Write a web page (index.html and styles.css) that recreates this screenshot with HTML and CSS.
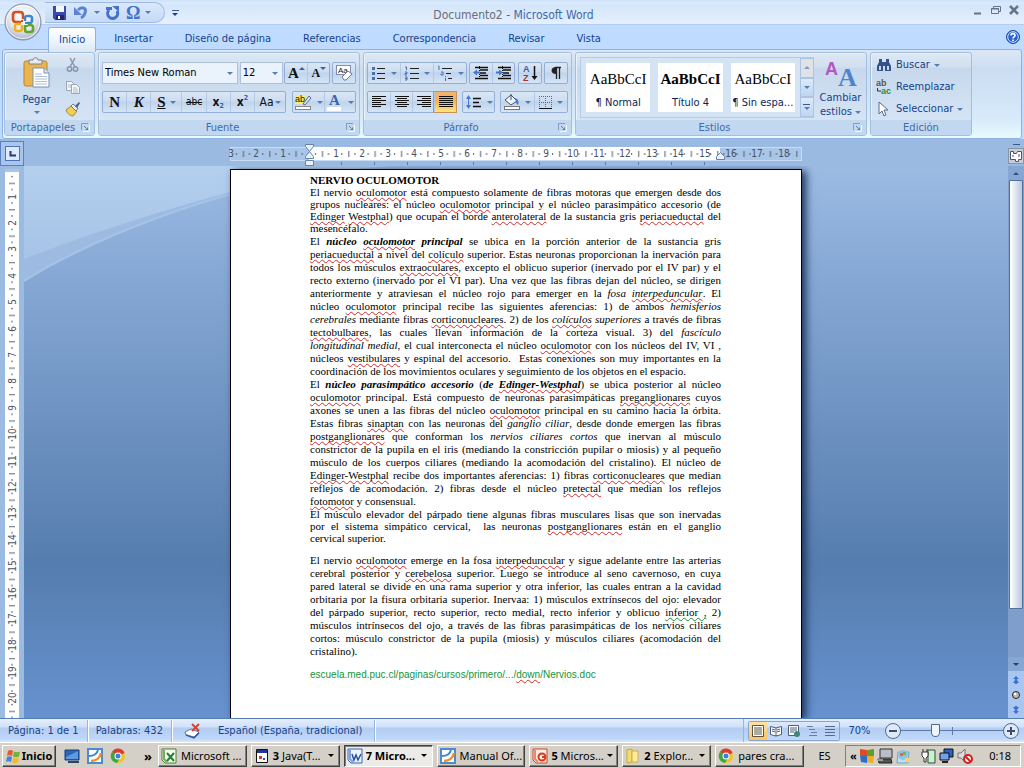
FILE: index.html
```html
<!DOCTYPE html>
<html lang="es">
<head>
<meta charset="utf-8">
<title>Documento2 - Microsoft Word</title>
<link rel="stylesheet" href="styles.css">
</head>
<body>
<div class="app">

<header class="titlebar">
  <div class="quick">
    <button aria-label="Guardar"><svg width="16" height="16" viewBox="0 0 16 16"><path d="M1 1h13v14H3l-2-2z" fill="#3b4aa8"/><path d="M4 1h8v6H4z" fill="#f4f7ff"/><path d="M4 10h8v5H4z" fill="#23286b"/><path d="M6 11h2v3H6z" fill="#fff"/></svg></button>
    <button aria-label="Deshacer"><svg width="16" height="16" viewBox="0 0 16 16"><path d="M5 5C9 1 14 3 12 8c-.6 2-2 4-4 5" fill="none" stroke="#5a84d2" stroke-width="3"/><path d="M1 2v8h8z" fill="#5a84d2"/></svg></button>
    <span class="caret"></span>
    <button aria-label="Rehacer"><svg width="16" height="16" viewBox="0 0 16 16"><path d="M4 5a5 5 0 1 0 8 1" fill="none" stroke="#4272cc" stroke-width="3"/><path d="M7 1h7v6z" fill="#4272cc"/><path d="M1 2h6v3H1z" fill="#4272cc"/></svg></button>
    <button aria-label="Símbolo" class="omega">Ω</button>
    <span class="caret"></span>
  </div>
  <button class="customize" aria-label="Personalizar"><span class="bar"></span><span class="caret dark"></span></button>
  <h1><span>Documento2</span> - Microsoft Word</h1>
  <div class="winbtns">
    <button aria-label="Minimizar"><svg width="12" height="12" viewBox="0 0 12 12"><path d="M2 9.500h7" stroke="#66738c" stroke-width="2"/></svg></button>
    <button aria-label="Restaurar"><svg width="12" height="12" viewBox="0 0 12 12"><path d="M3.500 4V2.500h7v5H9M1.500 4.500h7v5h-7z" fill="none" stroke="#66738c"/><path d="M1 5h8" stroke="#66738c"/></svg></button>
    <button aria-label="Cerrar"><svg width="12" height="12" viewBox="0 0 12 12"><path d="M2 2l8 8M10 2l-8 8" stroke="#66738c" stroke-width="2.500"/></svg></button>
  </div>
</header>

<nav class="tabs" role="tablist">
  <button role="tab" aria-selected="true" class="on">Inicio</button>
  <button role="tab">Insertar</button>
  <button role="tab">Diseño de página</button>
  <button role="tab">Referencias</button>
  <button role="tab">Correspondencia</button>
  <button role="tab">Revisar</button>
  <button role="tab">Vista</button>
  <button class="help" aria-label="Ayuda"><svg width="14" height="14" viewBox="0 0 14 14"><circle cx="7" cy="7" r="6.500" fill="#2765d6" stroke="#1b4aa5"/><circle cx="7" cy="7" r="5.300" fill="none" stroke="#cfe2ff"/><path d="M5 5.500c0-2.500 4-2.500 4 0C9 7 7 6.800 7 8.500M7 9.600v1.500" fill="none" stroke="#fff" stroke-width="1.600"/></svg></button>
</nav>

<button class="office" aria-label="Botón de Office"><svg width="38" height="38" viewBox="0 0 38 38">
  <defs><radialGradient id="orb" cx=".5" cy=".35" r=".65"><stop offset="0" stop-color="#fff"/><stop offset=".6" stop-color="#e3e8f0"/><stop offset="1" stop-color="#a4b1c6"/></radialGradient></defs>
  <circle cx="19" cy="19" r="18" fill="url(#orb)" stroke="#7c8ca8"/><circle cx="19" cy="19" r="16.500" fill="none" stroke="#fff" opacity=".8"/>
  <g fill="none" stroke-width="2.600"><path d="M17 19h-5c-2 0-3-1-3-3v-4c0-2 1-3 3-3h4c2 0 3 1 3 3v4" stroke="#da4f1c"/><path d="M21 18v-3c0-1 1-2 2-2h3c1 0 2 1 2 2v3c0 1-1 2-2 2h-3" stroke="#3a88cf"/><path d="M17 21h-4c-1 0-2 1-2 2v3c0 1 1 2 2 2h3c1 0 2-1 2-2v-3" stroke="#f2b21e"/><path d="M21 22v4c0 2 1 3 2 3h3c2 0 3-1 3-2v-3c0-1-1-2-2-2h-3" stroke="#62a52c"/></g>
  <path d="M17 17h2v2h-2z" fill="#da4f1c"/><path d="M21 19h2v2h-2z" fill="#3a88cf"/><path d="M17 22h2v2h-2z" fill="#f2b21e"/><path d="M22 22h2v2h-2z" fill="#62a52c"/>
</svg></button>

<div class="ribbon">
  <section class="group clip">
    <div class="body">
      <button class="paste"><svg width="30" height="32" viewBox="0 0 30 32"><rect x="2" y="4" width="23" height="25" rx="2" fill="#eab54e" stroke="#b98526"/><path d="M7 3h4c0-3 5-3 5 0h4v4H7z" fill="#e6e9ee" stroke="#7b818c"/><path d="M11 11h11l5 5v14H11z" fill="#fff" stroke="#7a8fb0"/><path d="M22 11v5h5" fill="#dfe9f6" stroke="#7a8fb0"/><path d="M13 17h7M13 19.500h12M13 22h12M13 24.500h12M13 27h12" stroke="#a9bfdd"/></svg><span>Pegar</span><span class="caret"></span></button>
      <div class="stack">
        <button aria-label="Cortar"><svg width="16" height="16" viewBox="0 0 16 16"><path d="M5 1l5 9M10 1L5 10" stroke="#8795ad" stroke-width="1.500"/><circle cx="4.500" cy="12" r="2.200" fill="none" stroke="#8795ad" stroke-width="1.500"/><circle cx="10.500" cy="12" r="2.200" fill="none" stroke="#8795ad" stroke-width="1.500"/></svg></button>
        <button aria-label="Copiar"><svg width="16" height="16" viewBox="0 0 16 16"><path d="M1.500 2.500h5l2 2v7h-7z" fill="#f4f6f9" stroke="#9aa5b7"/><path d="M6.500 5.500h5l3 3v6h-8z" fill="#f4f6f9" stroke="#9aa5b7"/><path d="M3 6h3M3 8h3M8 9h4M8 11h5M8 13h5" stroke="#b0bac8"/></svg></button>
        <button aria-label="Copiar formato"><svg width="16" height="16" viewBox="0 0 16 16"><path d="M1 9l5-4 6 5-4 5c-3 0-6-3-7-6z" fill="#f1cf57" stroke="#a8882f"/><path d="M6 5l2-2 5 4-2 3z" fill="#e9eef5" stroke="#6e7a8d"/><path d="M10 5l4-4 1 1-3 5z" fill="#4d5f86"/></svg></button>
      </div>
    </div>
    <footer><span>Portapapeles</span><button class="launch" aria-label="Portapapeles: opciones"><svg width="9" height="9" viewBox="0 0 9 9"><path d="M.500 7V.500H7" fill="none" stroke="#7c9cc9"/><path d="M8.500 2v6.500H2" fill="none" stroke="#f2f8ff"/><path d="M3 3l2 2" stroke="#567db1"/><path d="M7 4v3H4z" fill="#567db1"/></svg></button></footer>
  </section>

  <section class="group font">
    <div class="body rows">
      <div class="row">
        <div class="combo wide"><select aria-label="Fuente"><option>Times New Roman</option></select><span class="caret"></span></div>
        <div class="combo"><select aria-label="Tamaño"><option>12</option></select><span class="caret"></span></div>
        <div class="set push"><button class="serif" aria-label="Agrandar fuente">A<i class="up"></i></button><button class="serif small" aria-label="Encoger fuente">A<i class="down"></i></button></div>
        <div class="set push"><button aria-label="Borrar formato"><svg width="18" height="18" viewBox="0 0 18 18"><rect x="1.500" y="1.500" width="14" height="9" fill="#fff" stroke="#7d90ad"/><text x="3" y="9" font-size="8" font-family="Liberation Sans" fill="#222">Aa</text><path d="M7 13l6-6 4 3-6 6H9z" fill="#fff" stroke="#66789a"/></svg></button></div>
      </div>
      <div class="row">
        <div class="set style"><button class="serif"><b>N</b></button><button class="serif"><b><i>K</i></b></button><button class="serif split"><b><u>S</u></b><span class="caret"></span></button><button class="tiny"><s>abc</s></button><button class="bold">x<sub>2</sub></button><button class="bold">x<sup>2</sup></button><button class="split aa">Aa<span class="caret"></span></button></div>
        <div class="set"><button class="split" aria-label="Resaltado"><svg width="19" height="18" viewBox="0 0 19 18"><rect x="1" y="2" width="11" height="9" fill="#f7ee63"/><text x="1" y="9" font-size="9" font-family="Liberation Sans" fill="#111">ab</text><path d="M9 11l6-8 2 2-6 7z" fill="#dfe6f0" stroke="#5b6c8a"/><rect x="1.500" y="13.500" width="15" height="3" fill="#fff" stroke="#888"/></svg><span class="caret"></span></button><button class="split" aria-label="Color de fuente"><svg width="18" height="18" viewBox="0 0 18 18"><text x="3" y="12" font-size="15" font-weight="bold" font-family="Liberation Serif" fill="#3f64ad">A</text><rect x="1" y="14" width="14" height="4" fill="#fff"/></svg><span class="caret"></span></button></div>
      </div>
    </div>
    <footer><span>Fuente</span><button class="launch" aria-label="Fuente: opciones"><svg width="9" height="9" viewBox="0 0 9 9"><path d="M.500 7V.500H7" fill="none" stroke="#7c9cc9"/><path d="M8.500 2v6.500H2" fill="none" stroke="#f2f8ff"/><path d="M3 3l2 2" stroke="#567db1"/><path d="M7 4v3H4z" fill="#567db1"/></svg></button></footer>
  </section>

  <section class="group para">
    <div class="body rows">
      <div class="row">
        <div class="set grow">
          <button class="split" aria-label="Viñetas"><svg width="16" height="16" viewBox="0 0 16 16"><path d="M6 3.500h8M6 8.500h8M6 13.500h8" stroke="#222"/><path d="M1 2h3v3H1zM1 7h3v3H1zM1 12h3v3H1z" fill="#4a6fb5"/></svg><span class="caret"></span></button>
          <button class="split" aria-label="Numeración"><svg width="16" height="16" viewBox="0 0 16 16"><path d="M6 3.500h9M6 8.500h9M6 13.500h9" stroke="#222"/><path d="M1 2h1.500v3M1 7h2v1.500H1V10h2M1 12h2v3H1M1 13.500h2" fill="none" stroke="#4a6fb5"/></svg><span class="caret"></span></button>
          <button class="split" aria-label="Lista multinivel"><svg width="18" height="16" viewBox="0 0 18 16"><path d="M6 3.500h10M10 8.500h5M12 13.500h4" stroke="#222"/><path d="M2 1h1v4M5 7h2v3H5V8.500M9.500 11v1M9.500 13v3" fill="none" stroke="#4a6fb5"/></svg><span class="caret"></span></button>
        </div>
        <div class="set">
          <button aria-label="Disminuir sangría"><svg width="18" height="16" viewBox="0 0 18 16"><path d="M3 2.500h13M8 5h8M8 8h6M8 10.500h8M3 13.500h13" stroke="#111" stroke-width="1.500"/><path d="M7.500 1v14" stroke="#111" stroke-dasharray="1 1"/><path d="M1 7.500l4-3v2h3v2H5v2z" fill="#4577cf"/></svg></button>
          <button aria-label="Aumentar sangría"><svg width="18" height="16" viewBox="0 0 18 16"><path d="M3 2.500h13M8 5h8M8 8h6M8 10.500h8M3 13.500h13" stroke="#111" stroke-width="1.500"/><path d="M7.500 1v14" stroke="#111" stroke-dasharray="1 1"/><path d="M8 7.500l-4-3v2H1v2h3v2z" fill="#4577cf"/></svg></button>
        </div>
        <div class="set"><button aria-label="Ordenar"><svg width="18" height="18" viewBox="0 0 18 18"><text x="2" y="8" font-size="9" font-weight="bold" font-family="Liberation Sans" fill="#3c5fa5">A</text><text x="2" y="17" font-size="9" font-weight="bold" font-family="Liberation Sans" fill="#a83434">Z</text><path d="M13.500 2v12" stroke="#111" stroke-width="1.500"/><path d="M10.500 12h6l-3 4z" fill="#111"/></svg></button></div>
        <div class="set"><button aria-label="Mostrar todo"><svg width="16" height="16" viewBox="0 0 16 16"><path d="M13 2.500H7M8.500 2v12M11.500 2v12" stroke="#222" stroke-width="1.300"/><path d="M8 2C2 2 2 9 8 9z" fill="#222"/></svg></button></div>
      </div>
      <div class="row">
        <div class="set align">
          <button aria-label="Izquierda"><svg width="16" height="14" viewBox="0 0 16 14"><path d="M1 1.500h14M1 3.500h9M1 5.500h14M1 7.500h9M1 9.500h14M1 11.500h9" stroke="#111"/></svg></button>
          <button aria-label="Centrar"><svg width="16" height="14" viewBox="0 0 16 14"><path d="M1 1.500h14M3 3.500h10M1 5.500h14M3 7.500h10M1 9.500h14M3 11.500h10" stroke="#111"/></svg></button>
          <button aria-label="Derecha"><svg width="16" height="14" viewBox="0 0 16 14"><path d="M1 1.500h14M6 3.500h9M1 5.500h14M6 7.500h9M1 9.500h14M6 11.500h9" stroke="#111"/></svg></button>
          <button aria-label="Justificar" class="active"><svg width="16" height="14" viewBox="0 0 16 14"><path d="M1 1.500h14M1 3.500h14M1 5.500h14M1 7.500h14M1 9.500h14M1 11.500h14" stroke="#111"/></svg></button>
        </div>
        <div class="set"><button class="split" aria-label="Interlineado"><svg width="18" height="16" viewBox="0 0 18 16"><path d="M8 4.500h8M8 8.500h6M8 12.500h8" stroke="#111" stroke-width="1.300"/><path d="M3.500 3v10" stroke="#4577cf"/><path d="M1 5l2.500-4L6 5zM1 11l2.500 4L6 11z" fill="#4577cf"/></svg><span class="caret"></span></button></div>
        <div class="set grow">
          <button class="split" aria-label="Sombreado"><svg width="18" height="18" viewBox="0 0 18 18"><path d="M2 7l6-5 6 6-6 4z" fill="#eef3fa" stroke="#44536f"/><path d="M8 1v6" stroke="#44536f"/><path d="M12 5c4 1 4 5 3 7-2-1-2-3-3-7z" fill="#4b79c9"/><rect x="1.500" y="13.500" width="15" height="3" fill="#fff" stroke="#777"/></svg><span class="caret"></span></button>
          <button class="split" aria-label="Bordes"><svg width="15" height="15" viewBox="0 0 15 15"><path d="M1.500 1v12M7.500 1v12M13.500 1v12M1 1.500h13M1 7.500h13" stroke="#667" stroke-dasharray="1 1"/><path d="M1 13.500h13" stroke="#111"/></svg><span class="caret"></span></button>
        </div>
      </div>
    </div>
    <footer><span>Párrafo</span><button class="launch" aria-label="Párrafo: opciones"><svg width="9" height="9" viewBox="0 0 9 9"><path d="M.500 7V.500H7" fill="none" stroke="#7c9cc9"/><path d="M8.500 2v6.500H2" fill="none" stroke="#f2f8ff"/><path d="M3 3l2 2" stroke="#567db1"/><path d="M7 4v3H4z" fill="#567db1"/></svg></button></footer>
  </section>

  <section class="group styles">
    <div class="body">
      <div class="gallery">
        <button class="card"><span class="sample">AaBbCcI</span><span>¶ Normal</span></button>
        <button class="card"><span class="sample heavy">AaBbCcI</span><span>Título 4</span></button>
        <button class="card"><span class="sample">AaBbCcI</span><span>¶ Sin espa...</span></button>
        <div class="scroller"><button aria-label="Arriba" class="off"><span class="caret flip"></span></button><button aria-label="Abajo"><span class="caret"></span></button><button aria-label="Más"><span class="bar"></span><span class="caret"></span></button></div>
      </div>
      <button class="change"><svg width="32" height="32" viewBox="0 0 32 32"><text x="0" y="16" font-size="18" font-weight="bold" font-family="Liberation Sans" fill="#b557bd">A</text><text x="13" y="27" font-size="26" font-weight="bold" font-family="Liberation Serif" fill="#4c84cf">A</text></svg><span>Cambiar</span><span>estilos <span class="caret"></span></span></button>
    </div>
    <footer><span>Estilos</span><button class="launch" aria-label="Estilos: opciones"><svg width="9" height="9" viewBox="0 0 9 9"><path d="M.500 7V.500H7" fill="none" stroke="#7c9cc9"/><path d="M8.500 2v6.500H2" fill="none" stroke="#f2f8ff"/><path d="M3 3l2 2" stroke="#567db1"/><path d="M7 4v3H4z" fill="#567db1"/></svg></button></footer>
  </section>

  <section class="group edit">
    <div class="body list">
      <button><svg width="16" height="16" viewBox="0 0 16 16"><path d="M3 2h3v3h4V2h3v3l2 4v5H9V9H7v5H1V9l2-4z" fill="#33518a"/><path d="M3 9h2v4H3zM11 9h2v4h-2z" fill="#c6d8f2"/></svg>Buscar <span class="caret"></span></button>
      <button><svg width="16" height="16" viewBox="0 0 16 16"><text x="0" y="7" font-size="9" font-weight="bold" font-family="Liberation Sans" fill="#555">ab</text><text x="5" y="15" font-size="9" font-weight="bold" font-family="Liberation Sans" fill="#2d8a3a">ac</text><path d="M1.500 9v3H5" fill="none" stroke="#333"/></svg>Reemplazar</button>
      <button><svg width="16" height="16" viewBox="0 0 16 16"><path d="M3 1v12l3-3 2 5 2-1-2-5h4z" fill="#fff" stroke="#5a6b88"/></svg>Seleccionar <span class="caret"></span></button>
    </div>
    <footer><span>Edición</span></footer>
  </section>
</div>

<div class="rulerbar">
  <button class="tabstop" aria-label="Tabulación"><svg width="17" height="17" viewBox="0 0 17 17"><rect x="1.500" y="1.500" width="14" height="14" fill="#dce9fa" stroke="#4d74bb"/><path d="M6.500 6v4.500H12" fill="none" stroke="#223a6e" stroke-width="2"/></svg></button>
  <div class="rulerspace">
    <svg class="hruler" width="572" height="26" viewBox="0 0 572 26">
      <defs>
        <pattern id="cm" x="79" y="0" width="26.350" height="26" patternUnits="userSpaceOnUse"><path d="M6 12h1v2H6zM13 10h1v6h-1zM19 12h1v2h-1z" fill="#555f70"/></pattern>
        <pattern id="stops" x="79" y="0" width="33" height="26" patternUnits="userSpaceOnUse"><path d="M32 21h1v3h-1z" fill="#5d7aa8"/></pattern>
      </defs>
      <rect x=".500" y="6.500" width="571" height="13" fill="#a9c5e8" stroke="#c9dcf3"/>
      <rect x="79" y="6" width="411" height="13" fill="#fff"/>
      <rect x="0" y="0" width="571" height="20" fill="url(#cm)"/>
      <rect x="80" y="20" width="411" height="5" fill="url(#stops)"/>
      <g class="nums"><text x="1" y="16">3</text><text x="26" y="16">2</text><text x="53" y="16">1</text><text x="106" y="16">1</text><text x="132" y="16">2</text><text x="158" y="16">3</text><text x="184" y="16">4</text><text x="211" y="16">5</text><text x="237" y="16">6</text><text x="264" y="16">7</text><text x="290" y="16">8</text><text x="316" y="16">9</text><text x="343" y="16">10</text><text x="369" y="16">11</text><text x="395" y="16">12</text><text x="422" y="16">13</text><text x="448" y="16">14</text><text x="475" y="16">15</text><text x="501" y="16">16</text><text x="527" y="16">17</text><text x="554" y="16">18</text></g>
      <g fill="#e8f0fa" stroke="#6683b0"><path d="M75.500 3.500h8v2l-4 5-4-5zM75.500 17.500v-2l4-5 4 5v2zM75.500 19.500h8v5h-8zM486.500 18.500v-3l4-4 4 4v3z"/></g>
    </svg>
  </div>
  <div class="rulerend"><span class="bar"></span><button aria-label="Regla"><svg width="14" height="14" viewBox="0 0 14 14"><path d="M1.500 2.500h3v2h3l1-2h4v8h-3v2h-3v-2h-5z" fill="#fff" stroke="#4b5771"/><path d="M4 6v2M10 5v3" stroke="#4b5771"/></svg></button></div>
</div>

<main class="workspace">
  <div class="vcol">
    <svg class="vruler" width="14" height="549" viewBox="0 0 14 549">
      <defs><pattern id="vcm" x="0" y="1" width="14" height="26.400" patternUnits="userSpaceOnUse"><path d="M6 6h2v1H6zM4 13h6v1H4zM6 19h2v1H6z" fill="#555f70"/></pattern></defs>
      <rect width="14" height="549" fill="#fff"/><rect width="14" height="3" fill="#a9c5e8"/>
      <rect y="4" width="14" height="545" fill="url(#vcm)"/>
      <g class="nums" transform="rotate(-90)"><text x="-28" y="11">1</text><text x="-54" y="11">2</text><text x="-80" y="11">3</text><text x="-107" y="11">4</text><text x="-133" y="11">5</text><text x="-160" y="11">6</text><text x="-186" y="11">7</text><text x="-212" y="11">8</text><text x="-239" y="11">9</text><text x="-265" y="11">10</text><text x="-292" y="11">11</text><text x="-318" y="11">12</text><text x="-344" y="11">13</text><text x="-371" y="11">14</text><text x="-397" y="11">15</text><text x="-424" y="11">16</text><text x="-450" y="11">17</text><text x="-476" y="11">18</text><text x="-503" y="11">19</text><text x="-529" y="11">20</text></g>
    </svg>
  </div>
  <div class="canvas">
    <svg class="swoosh" width="420" height="120" viewBox="0 0 420 120" aria-hidden="true">
      <defs><linearGradient id="sky" x1="0" y1="0" x2="0" y2="1"><stop offset="0" stop-color="#b3cfee"/><stop offset="1" stop-color="#a6c4e7"/></linearGradient></defs>
      <path d="M0 0h420C300 0 150 30 0 115z" fill="#9dbbe1"/>
      <path d="M0 93C70 66 140 44 206 26 280 8 340 0 380 0H0z" fill="url(#sky)"/>
      <path d="M0 115C60 77 140 47 206 28" fill="none" stroke="#a5c3e8" stroke-width="2"/>
    </svg>
    <article class="page">
      <h2>NERVIO OCULOMOTOR</h2>
      <p class="tight"><span>El nervio <em>oculomotor</em> está compuesto solamente de fibras motoras que emergen desde dos</span>
      <span>grupos nucleares: el núcleo <em>oculomotor</em> principal y el núcleo parasimpático accesorio (de</span>
      <span><em>Edinger</em> <em>Westphal</em>) que ocupan el borde <em>anterolateral</em> de la sustancia gris <em>periacueductal</em> del</span>
      <span>mesencéfalo.</span></p>
      <p><span>El <b><i>núcleo <em>oculomotor</em> principal</i></b> se ubica en la porción anterior de la sustancia gris</span>
      <span><em>periacueductal</em> a nivel del <em>colículo</em> superior. Estas neuronas proporcionan la inervación para</span>
      <span>todos los músculos <em>extraoculares</em>, excepto el oblicuo superior (inervado por el IV par) y el</span>
      <span>recto externo (inervado por el VI par). Una vez que las fibras dejan del núcleo, se dirigen</span>
      <span>anteriormente y atraviesan el núcleo rojo para emerger en la <i>fosa <em>interpeduncular</em></i>. El</span>
      <span>núcleo <em>oculomotor</em> principal recibe las siguientes aferencias: 1) de ambos <i>hemisferios</i></span>
      <span><i>cerebrales</i> mediante fibras <em>corticonucleares</em>. 2) de los <i><em>colículos</em> superiores</i> a través de fibras</span>
      <span><em>tectobulbares</em>, las cuales llevan información de la corteza visual. 3) del <i>fascículo</i></span>
      <span><i>longitudinal medial</i>, el cual interconecta el núcleo <em>oculomotor</em> con los núcleos del IV, VI ,</span>
      <span>núcleos <em>vestibulares</em> y espinal del accesorio.&nbsp; Estas conexiones son muy importantes en la</span>
      <span>coordinación de los movimientos oculares y seguimiento de los objetos en el espacio.</span></p>
      <p><span>El <b><i>núcleo parasimpático accesorio</i></b> (<b><i>de <em>Edinger-Westphal</em></i></b>) se ubica posterior al núcleo</span>
      <span><em>oculomotor</em> principal. Está compuesto de neuronas parasimpáticas <em>preganglionares</em> cuyos</span>
      <span>axones se unen a las fibras del núcleo <em>oculomotor</em> principal en su camino hacia la órbita.</span>
      <span>Estas fibras <em>sinaptan</em> con las neuronas del <i>ganglio ciliar</i>, desde donde emergen las fibras</span>
      <span><em>postganglionares</em> que conforman los <i>nervios ciliares cortos</i> que inervan al músculo</span>
      <span>constrictor de la pupila en el iris (mediando la constricción pupilar o miosis) y al pequeño</span>
      <span>músculo de los cuerpos ciliares (mediando la acomodación del cristalino). El núcleo de</span>
      <span><em>Edinger-Westphal</em> recibe dos importantes aferencias: 1) fibras <em>corticonucleares</em> que median</span>
      <span>reflejos de acomodación. 2) fibras desde el núcleo <em>pretectal</em> que median los reflejos</span>
      <span><em>fotomotor</em> y consensual.</span></p>
      <p class="tight"><span>El músculo elevador del párpado tiene algunas fibras musculares lisas que son inervadas</span>
      <span>por el sistema simpático cervical,&nbsp; las neuronas <em>postganglionares</em> están en el ganglio</span>
      <span>cervical superior.</span></p>
      <p class="apart"><span>El nervio <em>oculomotor</em> emerge en la fosa <em>interpeduncular</em> y sigue adelante entre las arterias</span>
      <span>cerebral posterior y <em>cerebelosa</em> superior. Luego se introduce al seno cavernoso, en cuya</span>
      <span>pared lateral se divide en una rama superior y otra inferior, las cuales entran a la cavidad</span>
      <span>orbitaria por la fisura orbitaria superior. Inervaa: 1) músculos extrínsecos del ojo: elevador</span>
      <span>del párpado superior, recto superior, recto medial, recto inferior y oblicuo <em class="gram">inferior ,</em> 2)</span>
      <span>músculos intrínsecos del ojo, a través de las fibras parasimpáticas de los nervios ciliares</span>
      <span>cortos: músculo constrictor de la pupila (miosis) y músculos ciliares (acomodación del</span>
      <span>cristalino).</span></p>
      <p class="source">escuela.med.puc.cl/paginas/cursos/primero/.../<em>down</em>/Nervios.doc</p>
    </article>
  </div>
  <div class="vscroll">
    <button aria-label="Subir"><span class="caret flip dark"></span></button>
    <div class="track"><div class="thumb"></div></div>
    <button aria-label="Bajar"><span class="caret dark"></span></button>
    <div class="browse">
      <button aria-label="Página anterior"><svg width="10" height="10" viewBox="0 0 10 10"><path d="M5 1l3 3H6v1l2 3H6v1H4V8H2l2-3V4H2z" fill="#3b6fdc"/></svg></button>
      <button aria-label="Seleccionar objeto"><svg width="10" height="10" viewBox="0 0 10 10"><circle cx="5" cy="5" r="3.500" fill="#bbb" stroke="#222"/><circle cx="4" cy="4" r="1.200" fill="#fff"/></svg></button>
      <button aria-label="Página siguiente"><svg width="10" height="10" viewBox="0 0 10 10"><path d="M5 9l3-3H6V5l2-3H6V1H4v1H2l2 3v1H2z" fill="#3b6fdc"/></svg></button>
    </div>
  </div>
</main>

<div class="status">
  <span class="cell">Página: 1 de 1</span>
  <span class="cell">Palabras: 432</span>
  <span class="cell lang"><svg width="18" height="16" viewBox="0 0 18 16"><path d="M1 9l6-3 8 3-5 5-8-2z" fill="#fff" stroke="#5e77a4"/><path d="M2 12l8 3 5-5" fill="none" stroke="#395a94" stroke-width="1.500"/><path d="M8 1l7 7M15 1L8 8" stroke="#e2402c" stroke-width="2"/></svg>Español (España, tradicional)</span>
  <span class="fill"></span>
  <div class="views">
    <button class="active" aria-label="Diseño de impresión"><svg width="12" height="12" viewBox="0 0 12 12"><path d="M.500.500h11v11H.500z" fill="#fff" stroke="#5b5540"/><path d="M2 3h8M2 5h8M2 7h8M2 9h8" stroke="#5b5540"/></svg></button>
    <button aria-label="Lectura"><svg width="12" height="12" viewBox="0 0 12 12"><path d="M.500 1.500L6 3l5.500-1.500v8L6 11 .500 9.500zM6 3v8" fill="#fff" stroke="#4d5d78"/><path d="M2 4l3 1M2 6l3 1M7 5l3-1M7 7l3-1" stroke="#4d5d78"/></svg></button>
    <button aria-label="Web"><svg width="12" height="12" viewBox="0 0 12 12"><path d="M.500.500h10v10H.500z" fill="#fff" stroke="#4d5d78"/><path d="M2 3h7M2 5h7M2 7h4" stroke="#4d5d78"/><circle cx="9" cy="9" r="3" fill="#3e8a7c"/></svg></button>
    <button aria-label="Esquema"><svg width="12" height="12" viewBox="0 0 12 12"><path d="M1 1.500h6M3 4.500h6M5 7.500h6M3 10.500h8" stroke="#6d7f9c"/></svg></button>
    <button aria-label="Borrador"><svg width="12" height="12" viewBox="0 0 12 12"><path d="M1 1.500h10M1 4.500h10M1 7.500h10M1 10.500h10" stroke="#5a6a86"/></svg></button>
  </div>
  <button class="pct">70%</button>
  <button class="round" aria-label="Alejar"><svg width="16" height="16" viewBox="0 0 16 16"><circle cx="8" cy="8" r="7.500" fill="#dce9fa" stroke="#53688c"/><path d="M4 8h8" stroke="#3f4d66" stroke-width="2"/></svg></button>
  <input class="zoom" type="range" min="0" max="100" value="32" aria-label="Zoom">
  <button class="round" aria-label="Acercar"><svg width="16" height="16" viewBox="0 0 16 16"><circle cx="8" cy="8" r="7.500" fill="#dce9fa" stroke="#53688c"/><path d="M4 8h8M8 4v8" stroke="#3f4d66" stroke-width="2"/></svg></button>
</div>

<footer class="taskbar">
  <button class="start"><svg width="16" height="16" viewBox="0 0 16 16"><path d="M2 3c2-1.500 4-1 5 0L6 8C4 7 2.500 7 1 8z" fill="#e8592b"/><path d="M8 3.500c2 1 4 1 6 0l-1 5c-2 1-4 1-6 0z" fill="#6cb33c"/><path d="M1 9c1.500-1 3.500-1 5 0l-1 5c-2-1-3-1-5 0z" fill="#3f86dd"/><path d="M7 9.500c2 1 4 1 6 0l-1 5c-2 1-4 1-6 0z" fill="#f4b92f"/></svg>Inicio</button>
  <div class="launchers">
    <button aria-label="Escritorio"><svg width="16" height="16" viewBox="0 0 16 16"><path d="M1 2h14v10H1z" fill="#2c66b7" stroke="#173d78"/><path d="M2 9l12-6v8H2z" fill="#5b9be0"/><path d="M4 13h11v2H4z" fill="#31435f"/></svg></button>
    <button aria-label="OpenOffice"><svg width="16" height="16" viewBox="0 0 16 16"><path d="M1 1h14v14H1z" fill="#fff" stroke="#4d8ad2" stroke-width="2"/><path d="M2 8c5 0 8-2 9-6" fill="none" stroke="#3d87d6" stroke-width="2"/><path d="M4 13c5 0 9-3 10-8" fill="none" stroke="#f09022" stroke-width="2.500"/></svg></button>
    <button aria-label="Chrome"><svg width="16" height="16" viewBox="0 0 16 16"><circle cx="8" cy="8" r="7" fill="#f2c51d"/><path d="M8 8L2 4a7 7 0 0 1 12.500 1z" fill="#dc3d2e"/><path d="M8 8L2 4a7 7 0 0 0 5 11l3-5z" fill="#3da648"/><circle cx="8" cy="8" r="3.500" fill="#fff"/><circle cx="8" cy="8" r="2.500" fill="#3e7fdc"/></svg></button>
  </div>
  <b class="more">»</b>
  <div class="tasks">
    <button><svg width="16" height="16" viewBox="0 0 16 16"><path d="M1 1h14v14H4l-3-3z" fill="#f5faef" stroke="#487e3b"/><path d="M3 2v9l3 3" fill="none" stroke="#77aa5d" stroke-width="2"/><path d="M6 5l7 8M13 5l-7 8" stroke="#27802f" stroke-width="2"/></svg><span>Microsoft ...</span></button>
    <button><svg width="16" height="16" viewBox="0 0 16 16"><path d="M2.500 1.500h11v13h-11z" fill="#fff" stroke="#111"/><path d="M3 2h10v3H3z" fill="#20379a"/><path d="M5 8h3v3H5z" fill="#d23a2b"/><path d="M9 10h2v2H9z" fill="#2b4fd2"/></svg><span><b>3</b> Java(T...</span><i class="tri"></i></button>
    <button class="pressed"><svg width="16" height="16" viewBox="0 0 16 16"><path d="M1 1h14v14H4l-3-3z" fill="#edf3fc" stroke="#3a62ad"/><path d="M3 2v9l3 3" fill="none" stroke="#7fa0d8" stroke-width="2"/><path d="M5 6l2 6 2-5 2 5 3-6" fill="none" stroke="#274f9f" stroke-width="1.500"/></svg><span><b>7 Micro...</b></span><i class="tri"></i></button>
    <button><svg width="16" height="16" viewBox="0 0 16 16"><path d="M1 1h14v14H1z" fill="#fff" stroke="#4d8ad2" stroke-width="2"/><path d="M2 8c5 0 8-2 9-6" fill="none" stroke="#3d87d6" stroke-width="2"/><path d="M4 13c5 0 9-3 10-8" fill="none" stroke="#f09022" stroke-width="2.500"/></svg><span>Manual Of...</span></button>
    <button><svg width="16" height="16" viewBox="0 0 16 16"><path d="M1 1h14v14H4l-3-3z" fill="#fdeee9" stroke="#cf4426"/><path d="M3 2v9l3 3" fill="none" stroke="#e8866e" stroke-width="2"/><circle cx="10" cy="9" r="3.500" fill="none" stroke="#d43c1e" stroke-width="2"/><path d="M10 9h4" stroke="#d43c1e" stroke-width="2"/></svg><span><b>5</b> Micros...</span><i class="tri"></i></button>
    <button><svg width="16" height="16" viewBox="0 0 16 16"><path d="M2 2l5-1v13l-5 1z" fill="#f6dc6a" stroke="#c9a93c"/><path d="M7 3h6v11H7z" fill="#fbeb9a" stroke="#d0b04a"/></svg><span><b>2</b> Explor...</span><i class="tri"></i></button>
    <button><svg width="16" height="16" viewBox="0 0 16 16"><circle cx="8" cy="8" r="7" fill="#f2c51d"/><path d="M8 8L2 4a7 7 0 0 1 12.500 1z" fill="#dc3d2e"/><path d="M8 8L2 4a7 7 0 0 0 5 11l3-5z" fill="#3da648"/><circle cx="8" cy="8" r="3.500" fill="#fff"/><circle cx="8" cy="8" r="2.500" fill="#3e7fdc"/></svg><span>pares cra...</span></button>
  </div>
  <span class="lng">ES</span>
  <div class="tray">
    <b>«</b>
    <svg width="16" height="16" viewBox="0 0 16 16"><path d="M1 1l7 1v6H1z" fill="#de4a26"/><path d="M8 2l7-1v7H8z" fill="#5f9f2f"/><path d="M1 8h7v7l-6-1z" fill="#2c6fc9"/><path d="M8 8h7l-1 7-6-1z" fill="#f0ac25"/></svg>
    <svg width="16" height="16" viewBox="0 0 16 16"><path d="M3 1h12v9H3z" fill="#b9bec6" stroke="#333"/><path d="M1 11h13l1 4H2z" fill="#555" stroke="#222"/><path d="M1 12h5" stroke="#eee"/></svg>
    <svg width="16" height="16" viewBox="0 0 16 16"><path d="M3 4h11l-1 11H2z" fill="#bfe0f2" stroke="#6fa5c6"/><circle cx="8" cy="7" r="5" fill="#8cc3e6"/><path d="M5 5h3v3H5z" fill="#e8683a"/><path d="M8 4h3v3H8z" fill="#76b94b"/><path d="M10 10h4v4h-4z" fill="#f3d36b"/></svg>
    <svg class="gapl" width="16" height="16" viewBox="0 0 16 16"><path d="M7 2h7v13H7z" fill="#c9f0cf" stroke="#2b5136"/><path d="M1 4h6v4l-2 2v4H3v-4L1 8zM2 4V1M6 4V1" fill="#fff" stroke="#333"/></svg>
    <svg width="16" height="16" viewBox="0 0 16 16"><path d="M5 1h9v8H5z" fill="#2b62c4" stroke="#111"/><path d="M1 5h9v7H1z" fill="#6ea3ef" stroke="#111"/><path d="M3 14h6" stroke="#222" stroke-width="2"/></svg>
    <svg width="16" height="16" viewBox="0 0 16 16"><path d="M1 5h3l4-4v13l-4-4H1z" fill="#ddd" stroke="#777"/><circle cx="11" cy="11" r="4" fill="#fff" stroke="#cf2020" stroke-width="2"/><path d="M8 8l6 6" stroke="#cf2020" stroke-width="2"/></svg>
    <time>0:18</time>
  </div>
</footer>
</div>
</body>
</html>
```

FILE: styles.css
```css
* { box-sizing: border-box; }
body { margin: 0; font-family: "DejaVu Sans Condensed", "DejaVu Sans", sans-serif; font-size: 11px; line-height: 14px; color: #15428b; }
button { font: inherit; color: inherit; background: none; border: 0; padding: 0; margin: 0; display: flex; align-items: center; justify-content: center; }
svg { display: block; flex: none; }

.app { position: relative; display: flex; flex-direction: column; height: 100vh; overflow: hidden; background: #bfdbff; }
.caret { display: inline-block; flex: none; width: 0; height: 0; border: 3px solid transparent; border-top-color: #567db1; border-bottom: 0; }
.caret.flip { border-top: 0; border-bottom: 3px solid #8f9cb0; }
.caret.dark { border-top-color: #1e3f7a; }
.bar { display: block; width: 7px; height: 1px; background: #3c5a8c; }

.titlebar { flex: none; display: flex; align-items: center; height: 25px; padding: 0 4px 0 45px; background: linear-gradient(#cde1fa 0, #dcebfd 4px, #d4e5fa 5px, #e5f0fd 24px, #b4cdf0 24px); }
.quick { display: flex; align-items: center; gap: 5px; height: 21px; width: 120px; padding: 0 7px; border: 1px solid #9fbbe2; border-left: 0; border-radius: 0 11px 11px 0; background: linear-gradient(#dbe8fb, #c4daf6); }
.omega { font: bold 18px/18px "Liberation Serif", serif; color: #4272cc; }
.customize { flex-direction: column; gap: 2px; width: 20px; }
.titlebar h1 { flex: 1; margin: 4px 0 0; padding-right: 130px; font-size: 12px; font-weight: normal; line-height: 14px; text-align: center; color: #3e6aaa; }
.titlebar h1 span { color: #696f79; }
.winbtns { display: flex; gap: 6px; padding-bottom: 6px; }

.tabs { flex: none; display: flex; height: 25px; padding: 2px 4px 0 48px; background: #bfdbff; }
.tabs button { height: 24px; padding: 0 16px; }
.tabs .on { z-index: 1; height: 25px; margin-right: 2px; padding: 0 10px; border: 1px solid #8db2e3; border-bottom: 0; border-radius: 3px 3px 0 0; background: linear-gradient(#fff, #eaf3fd 60%, #dbe7f5); }
.tabs .help { margin-left: auto; padding: 0; height: 20px; }
.office { position: absolute; left: 4px; top: 3px; z-index: 2; }

.ribbon { flex: none; display: flex; gap: 3px; height: 90px; margin: -1px 2px 0; padding: 2px 1px; border: 1px solid #8db2e3; border-radius: 3px; background: linear-gradient(#dbe6f4, #cfe0f3 16px, #c9dcf2 17px, #d8ebfa 80%, #e8fbff); }
.group { display: flex; flex-direction: column; border: 1px solid #a3bfdd; border-radius: 3px; background: linear-gradient(#dee8f5, #d1dfef 14px, #c7d8ed 15px, #d9e8f7); box-shadow: inset 1px 1px 0 #e9f2fb; }
.group .body { flex: 1; min-height: 0; display: flex; }
.group footer { display: flex; align-items: center; height: 15px; background: #c1d8f0; color: #3e6aaa; }
.group footer span { flex: 1; text-align: center; }
.launch { width: 9px; height: 9px; margin-right: 4px; }
.clip { width: 91px; }
.font { width: 262px; }
.para { width: 209px; }
.styles { width: 292px; }
.edit { width: 102px; }

.paste { flex: 1; flex-direction: column; justify-content: flex-start; gap: 4px; padding: 4px 0 0 8px; }
.stack { display: flex; flex-direction: column; gap: 6px; width: 34px; padding: 4px 8px 0 0; align-items: center; }

.body.rows { flex-direction: column; gap: 7px; padding: 9px 3px 0; }
.row { display: flex; justify-content: space-between; height: 22px; }
.combo { display: grid; align-items: center; width: 43px; background: #eaf2fb; border: 1px solid #abc1de; }
.combo.wide { width: 136px; }
.combo > * { grid-area: 1 / 1; }
.combo select { appearance: none; width: 100%; height: 20px; padding: 0 2px; border: 0; border-radius: 0; background: none; font: inherit; color: #000; }
.combo .caret { justify-self: end; margin-right: 4px; }
.set { display: flex; border: 1px solid #93afd6; border-radius: 2px; background: linear-gradient(#dbe7f5, #cbdcf0 45%, #bfd3ec 50%, #d5e5f7); }
.set button { min-width: 22px; flex: 1; color: #111; }
.set button + button { border-left: 1px solid #b3c8e4; }
.set .split { gap: 4px; min-width: 31px; }
.set .serif { font: bold 15px/18px "Liberation Serif", serif; }
.set .small { font-size: 12px; }
.serif i.up, .serif i.down { align-self: flex-start; margin-top: 4px; border: 3px solid transparent; }
.serif i.up { border-top: 0; border-bottom-color: #3c5fa5; }
.serif i.down { border-bottom: 0; border-top-color: #3c5fa5; }
.style { width: 184px; }
.style .tiny { font-size: 10px; }
.style .bold { font-size: 12px; font-weight: bold; }
.style sub, .style sup { font-size: 7px; color: #3c5fa5; line-height: 8px; }
.style sub { padding-top: 8px; }
.style sup { padding-bottom: 8px; }
.set .aa { gap: 1px; font-size: 12px; }
.para .grow { min-width: 68px; }
.para .row:first-child .grow { width: 100px; }
.align .active { background: linear-gradient(#f2b370, #fbb04d 45%, #ffe383); box-shadow: 0 0 0 1px #c2955a; }

.styles .body { padding: 4px 3px 0 4px; gap: 4px; }
.gallery { display: flex; gap: 8px; height: 61px; width: 234px; padding: 5px 0 5px 5px; border: 1px solid #b5cbe8; background: #d5e4f5; }
.card { flex: 1; width: 64px; min-width: 0; flex-direction: column; justify-content: space-between; padding: 6px 0 2px; background: #fff; color: #0b1f56; white-space: nowrap; overflow: hidden; }
.sample { font: 15px/20px "Liberation Serif", serif; color: #000; }
.heavy { font-weight: bold; }
.scroller { display: flex; flex-direction: column; width: 14px; margin: -5px -1px -5px -3px; }
.scroller button { flex: 1; flex-direction: column; gap: 2px; border: 1px solid #abc4e4; background: linear-gradient(#dceafb, #bfd5f2); }
.scroller .off { background: #dfe3e8; }
.change { flex: 1; flex-direction: column; justify-content: flex-start; padding-top: 2px; }
.change .caret { vertical-align: middle; }
.list { flex-direction: column; gap: 6px; padding: 4px 0 0 5px; }
.list button { justify-content: flex-start; gap: 4px; height: 16px; }

.rulerbar { flex: none; display: flex; height: 27px; padding-top: 2px; background: #9abae1; }
.tabstop { width: 24px; border: 1px solid #5a80c4; background: #a9c5ea; }
.rulerspace { flex: 1; display: flex; justify-content: center; min-width: 0; }
.hruler { overflow: visible; }
.nums { font-size: 10px; fill: #475266; text-anchor: middle; }
.rulerend { display: flex; flex-direction: column; align-items: center; gap: 3px; width: 16px; padding-top: 3px; }
.rulerend button { width: 16px; height: 16px; border: 1px solid #8a94a8; background: #c6ccd8; }

.workspace { flex: 1; min-height: 0; display: flex; }
.vcol { width: 24px; padding: 3px 5px 0; background: #9bbbe2; overflow: hidden; }
.canvas { position: relative; flex: 1; min-width: 0; display: flex; justify-content: center; align-items: stretch; padding-top: 3px; overflow: hidden; background: linear-gradient(#9bbbe3, #84a6d3 22%, #557dae 72%, #6692cf); }
.swoosh { position: absolute; left: 0; top: 0; }
.page { position: relative; flex: none; width: 572px; padding: 4px 80px 0 79px; border: 1px solid #000; border-bottom: 0; background: #fff; box-shadow: 4px 2px 8px #1d355c; color: #000; font: 11px/13px "Liberation Serif", "Times New Roman", serif; }
.page h2 { margin: 0; font-size: 11px; line-height: 12px; }
.page p { margin: 0; }
.page p span { display: block; text-align: justify; text-align-last: justify; white-space: nowrap; }
.page p span:last-child { text-align-last: left; }
.page .tight { line-height: 12px; }
.page .tight + p { margin-top: 1px; }
.page .tight + .apart { margin-top: 10px; }
.page em { font-style: inherit; text-decoration: underline wavy #d22a2a 1px; text-decoration-skip-ink: none; text-underline-offset: 1px; }
.page em.gram { text-decoration-color: #1f8a2d; }
.page .source { margin-top: 10px; font: 10px/13px "Liberation Sans", Arial, sans-serif; color: #12953a; }

.vscroll { display: flex; flex-direction: column; width: 16px; background: #a9c6f0; }
.vscroll > button { height: 14px; background: #86a6d3; }
.vscroll .flip { border-bottom-color: #34507f; }
.track { flex: 1; background: #7f9ec9; padding: 0 1px; }
.thumb { height: 90%; border: 1px solid #53719f; border-radius: 1px; background: linear-gradient(90deg, #fff, #e3e9f2 40%, #b8c8de); }
.browse { display: flex; flex-direction: column; gap: 5px; align-items: center; padding: 4px 0 3px; }

.status { flex: none; display: flex; align-items: center; height: 24px; border-top: 1px solid #567db0; background: linear-gradient(#e5effd, #cfe0f8 8px, #b3cdf3 9px, #bfd7f8 20px, #d9e8fb); padding-right: 5px; }
.cell { display: flex; align-items: center; height: 22px; padding: 0 8px; border-right: 1px solid #96b5e0; box-shadow: 1px 0 #fff; }
.lang { gap: 16px; padding: 0 12px; }
.fill { flex: 1; align-self: stretch; margin-right: 4px; border-right: 1px solid #96b5e0; }
.views { display: flex; border: 1px solid #86a5d3; border-radius: 2px; }
.views button { width: 18px; height: 18px; }
.views .active { background: linear-gradient(#fde3a8, #fbc45f); }
.pct { width: 45px; padding-right: 6px; }
.round { width: 16px; }
.zoom { appearance: none; width: 102px; height: 18px; margin: 0; background: linear-gradient(#5f7ba8, #5f7ba8) center / 100% 1px no-repeat, linear-gradient(#5f7ba8, #5f7ba8) center / 1px 8px no-repeat; }
.zoom::-webkit-slider-thumb { appearance: none; width: 9px; height: 13px; border: 1px solid #53688c; border-radius: 1px 1px 5px 5px; background: #eef4fc; }

.taskbar { flex: none; display: flex; align-items: center; height: 26px; padding: 0 3px 0 2px; border-top: 1px solid #fff; background: #d4d0c8; color: #000; font-family: "Noto Sans", sans-serif; }
.start, .tasks button { height: 22px; border: 1px solid; border-color: #fff #404040 #404040 #fff; box-shadow: inset -1px -1px #808080; }
.start { width: 54px; font-weight: bold; }
.launchers { display: flex; gap: 7px; margin-left: 8px; }
.more { width: 32px; padding-left: 18px; font-size: 13px; }
.tasks { flex: 1; min-width: 0; display: flex; gap: 4px; }
.tasks button { flex: 1; width: 0; justify-content: flex-start; gap: 4px; padding: 0 5px 0 2px; white-space: nowrap; }
.tasks .pressed { border-color: #404040 #fff #fff #404040; box-shadow: inset 1px 1px #808080; background: #edebe7; }
.tri { margin-left: auto; border: 3px solid transparent; border-top-color: #000; border-bottom: 0; }
.tasks button:has(.tri) { gap: 3px; }
.lng { width: 41px; text-align: center; }
.tray { display: flex; align-items: center; gap: 2px; width: 176px; height: 22px; padding: 0 9px 0 4px; border: 1px solid; border-color: #808080 #fff #fff #808080; }
.tray .gapl { margin-left: 8px; }
.tray time { margin-left: auto; }
```
